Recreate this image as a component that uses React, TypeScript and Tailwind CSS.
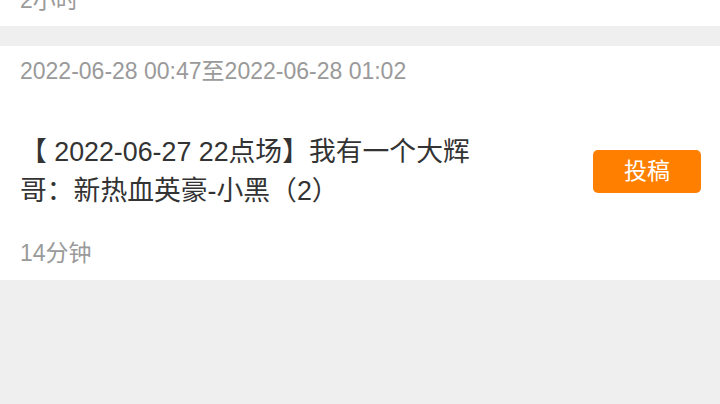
import React from "react";

const font = "font-['Liberation_Sans','Noto_Sans_CJK_SC',sans-serif]";

export default function App() {
  return (
    <div className={`w-[720px] h-[404px] overflow-hidden bg-[#efefef] ${font}`}>
      <div className="bg-white px-[20px] pb-[10px]">
        <div className="-mt-[15px] text-[23px] leading-[31px] text-[#9a9a9a]">2小时</div>
      </div>
      <div className="mt-[20px] bg-white pl-[20px] pr-[19px] pt-[10px] pb-[11px]">
        <div className="text-[23px] leading-[31px] text-[#9a9a9a]">
          2022-06-28 00:47至2022-06-28 01:02
        </div>
        <div className="mt-[46px] flex items-center justify-between">
          <div className="w-[484px] text-[26.8px] leading-[38.5px] text-[#333333]">
            【 2022-06-27 22点场】我有一个大辉哥：新热血英豪-小黑（2）
          </div>
          <button className="flex h-[43px] w-[108px] items-center justify-center rounded-[5px] bg-[#ff7f00] text-[23px] text-white">
            投稿
          </button>
        </div>
        <div className="mt-[28px] text-[23px] leading-[31px] text-[#9a9a9a]">14分钟</div>
      </div>
    </div>
  );
}
